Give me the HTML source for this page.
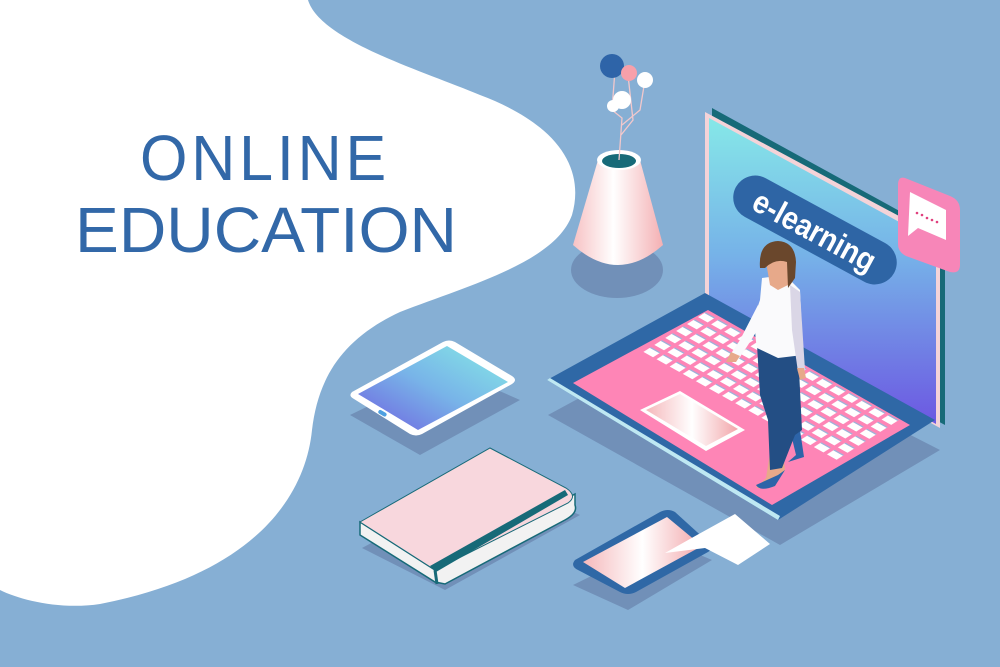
<!DOCTYPE html>
<html><head><meta charset="utf-8"><style>
html,body{margin:0;padding:0;width:1000px;height:667px;overflow:hidden;background:#86afd4}
svg{display:block}
</style></head><body>
<svg width="1000" height="667" viewBox="0 0 1000 667" xmlns="http://www.w3.org/2000/svg">
<defs>
<linearGradient id="scr" x1="0" y1="0" x2="0" y2="1"><stop offset="0" stop-color="#86e8e8"/><stop offset="0.45" stop-color="#76b2e8"/><stop offset="1" stop-color="#6c58e2"/></linearGradient>
<linearGradient id="tab" x1="0" y1="1" x2="1" y2="0"><stop offset="0" stop-color="#6f60e0"/><stop offset="0.5" stop-color="#78b4e8"/><stop offset="1" stop-color="#86eae6"/></linearGradient>
<linearGradient id="pad" x1="0" y1="0" x2="1" y2="0"><stop offset="0" stop-color="#f5b8bb"/><stop offset="0.5" stop-color="#ffffff"/><stop offset="1" stop-color="#f2a6aa"/></linearGradient>
<linearGradient id="vase" x1="0" y1="0" x2="1" y2="0"><stop offset="0" stop-color="#f7c2c4"/><stop offset="0.45" stop-color="#fff"/><stop offset="1" stop-color="#f4b0b3"/></linearGradient>
<pattern id="keys" width="15" height="13" patternUnits="userSpaceOnUse"><rect x="2" y="2" width="11" height="9" fill="#ffffff"/><rect x="2" y="9.5" width="11" height="1.5" fill="#9fb0d8"/></pattern>
</defs>
<rect width="1000" height="667" fill="#86afd4"/>
<path d="M308 0 C320 40 420 70 480 95 C560 125 585 170 572 215 C555 262 470 285 400 312 C340 340 318 380 312 430 C305 500 250 575 100 604 C60 610 20 600 0 590 L0 0 Z" fill="#fff"/>
<text x="265" y="180" text-anchor="middle" font-family="Liberation Sans, sans-serif" font-size="64" fill="#3268a8" textLength="250" lengthAdjust="spacingAndGlyphs" letter-spacing="4">ONLINE</text>
<text x="266" y="252" text-anchor="middle" font-family="Liberation Sans, sans-serif" font-size="64" fill="#3268a8" textLength="382" lengthAdjust="spacingAndGlyphs">EDUCATION</text>

<g fill="#7190b8">
<ellipse cx="617" cy="270" rx="46" ry="28"/>
<path d="M350 415 L447 368 L520 400 L420 455 Z"/>
<path d="M362 548 L492 478 L580 515 L445 590 Z"/>
<path d="M573 585 L665 540 L712 560 L628 610 Z"/>
<path d="M548 415 L705 330 L940 450 L780 545 Z"/>
</g>

<path d="M598 160 L573 245 Q618 285 663 245 L640 160 Z" fill="url(#vase)"/>
<ellipse cx="619" cy="160" rx="22" ry="10" fill="#fff"/>
<ellipse cx="619" cy="161" rx="17" ry="7" fill="#176a78"/>
<g stroke="#f2c8cc" stroke-width="1.3" fill="none">
<path d="M619 160 L622 118 L612 110 L615 70"/><path d="M621 135 L633 120 L628 75"/><path d="M622 125 L640 110 L645 80"/>
</g>
<circle cx="612" cy="66" r="12" fill="#2e64a8"/>
<circle cx="629" cy="73" r="8" fill="#f7a0aa"/>
<circle cx="645" cy="80" r="8" fill="#fff"/>
<circle cx="622" cy="100" r="9" fill="#fff"/><circle cx="613" cy="106" r="6" fill="#fff"/>

<path d="M712 108 L945 236 L945 425 L712 300 Z" fill="#176a78"/>
<path d="M705 112 L940 238 L940 428 L705 300 Z" fill="#f4d3d8"/>
<path d="M709 118 L936 242 L936 424 L709 298 Z" fill="url(#scr)"/>
<g transform="translate(815 230) rotate(28.5)">
<rect x="-90" y="-22" width="180" height="44" rx="22" fill="#2e65a5"/>
<text x="0" y="12" text-anchor="middle" font-family="Liberation Sans, sans-serif" font-weight="bold" font-size="32" fill="#fff" textLength="135" lengthAdjust="spacingAndGlyphs">e-learning</text>
</g>
<path d="M905 178 Q898 176 898 185 L898 244 Q898 252 906 256 L950 272 Q960 274 960 265 L960 210 Q960 200 950 196 Z" fill="#f786b8"/>
<path d="M910 192 L946 210 L946 240 L918 228 L908 236 Z" fill="#fff"/>
<g fill="#e0407e"><circle cx="917" cy="213" r="1.3"/><circle cx="922" cy="215" r="1.3"/><circle cx="927" cy="218" r="1.3"/><circle cx="932" cy="220" r="1.3"/><circle cx="937" cy="222" r="1.3"/></g>

<path d="M547 380 L705 293 L935 420 L778 520 Z" fill="#2f68a6"/>
<path d="M547 380 L778 520 L780 516 L550 378 Z" fill="#bfe8f2"/>
<path d="M573 383 L708 310 L910 425 L772 505 Z" fill="#fe85b6"/>
<g transform="matrix(0.874 0.488 0.84 -0.536 640 352)">
<rect x="0" y="0" width="225" height="78" fill="url(#keys)"/>
</g>
<path d="M640 410 L680 391 L745 430 L706 451 Z" fill="#fff"/>
<path d="M646 410 L680 394 L738 429 L706 446 Z" fill="url(#pad)"/>

<path d="M772 440 L766 478 L756 488 L773 487 L785 470 L782 440 Z" fill="#e7a98a"/>
<path d="M756 485 Q760 492 775 486 L785 470 L778 475 Z" fill="#2d64a8"/>
<path d="M790 430 L796 455 L788 462 L804 457 L800 430 Z" fill="#2d64a8"/>
<path d="M757 345 L798 350 L802 430 L795 435 L782 468 L770 470 L768 420 L760 395 Z" fill="#234e84"/>
<path d="M762 278 L785 275 L800 290 L803 355 L778 358 L757 348 Q752 320 760 300 Z" fill="#fafafc"/>
<path d="M790 285 L800 292 L805 370 L798 372 L792 330 Z" fill="#dad6e6"/>
<path d="M758 305 L740 340 L730 355 L738 360 L748 345 L765 318 Z" fill="#fafafc"/>
<path d="M731 352 L726 362 L736 362 L740 356 Z" fill="#e7a98a"/>
<path d="M797 368 L800 380 L806 378 L804 368 Z" fill="#e7a98a"/>
<path d="M766 262 L770 285 L778 290 L788 285 L790 258 Z" fill="#e7a98a"/>
<path d="M760 268 Q758 242 778 241 Q795 242 796 262 L795 278 L788 288 L787 262 Q775 258 765 268 Z" fill="#6a472c"/>

<path d="M352 392 Q348 396 354 399 L410 434 Q416 437 422 434 L512 384 Q518 380 512 376 L455 342 Q449 339 443 342 Z" fill="#fff"/>
<path d="M358 394 L447 346 L508 382 L418 430 Z" fill="url(#tab)"/>
<rect x="378" y="411" width="9" height="4" rx="2" fill="#4fa0e0" transform="rotate(30 382 413)"/>

<path d="M360 522 L360 535 L435 582 L445 584 L565 520 Q578 513 575 505 L575 494 L435 570 Z" fill="#f2f2f2" stroke="#176a78" stroke-width="1.5"/>
<path d="M360 522 L490 448 L566 488 Q578 496 568 503 L435 570 Z" fill="#f8d7dd" stroke="#176a78" stroke-width="1"/>
<path d="M430 566 L565 490 L568 495 L436 572 Z" fill="#176a78"/>
<path d="M435 570 L437 584" stroke="#176a78" stroke-width="3"/>

<path d="M575 560 Q570 566 578 570 L620 592 Q628 596 636 592 L708 552 Q716 547 708 542 L675 512 Q668 508 660 512 Z" fill="#2f68a6"/>
<path d="M583 562 L667 517 L702 546 L625 588 Z" fill="url(#pad)"/>
<path d="M697 535 L735 514 L770 544 L738 565 L705 548 L665 553 Z" fill="#fff"/>
</svg>
</body></html>
